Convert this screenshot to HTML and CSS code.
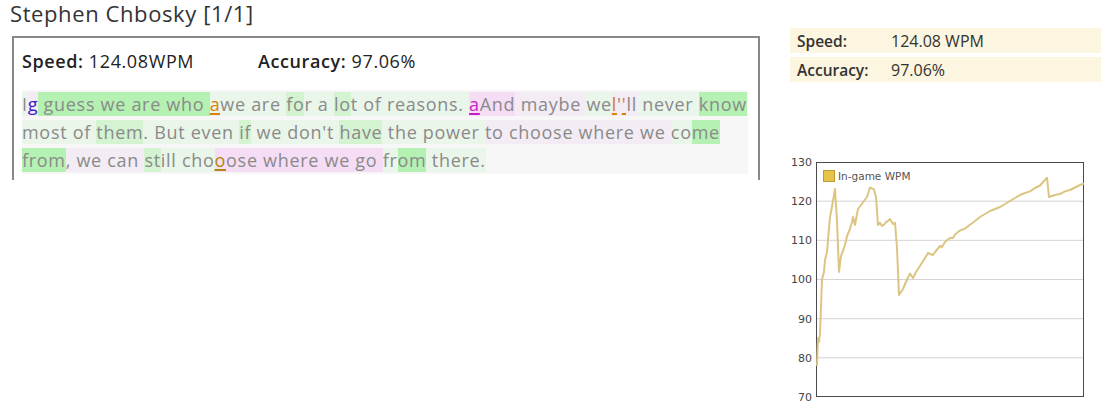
FILE: index.html
```html
<!DOCTYPE html>
<html>
<head>
<meta charset="utf-8">
<link rel="stylesheet" href="styles.css">
</head>
<body>
<div class="page">
  <div class="left">
    <h1 class="title">Stephen Chbosky [1/1]</h1>
    <div class="box">
      <div class="summary">
        <div class="stat stat-speed"><b>Speed:</b> 124.08WPM</div>
        <div class="stat"><b>Accuracy:</b> 97.06%</div>
      </div>
      <div class="replay"><span class="lg">I</span><span class="err e1 lp">g</span><span class="hg"> guess we are who </span><span class="err e2 lg">a</span><span class="lg">we </span><span class="lg">are </span><span class="mg">fo</span><span class="lg">r a </span><span class="mg">lo</span><span class="lg">t of </span><span class="lg">reasons. </span><span class="err e3 pk">a</span><span class="pk">And</span><span class="lp"> maybe </span><span class="lg">we</span><span class="err e2 lp">l</span><span class="lp">'</span><span class="err e2 lp">'</span><span class="lp">ll</span><span class="lg"> never </span><span class="hg">know</span><br><span class="lg">most of </span><span class="mg">them</span><span class="lg">. But even </span><span class="mg">if</span><span class="lg"> we don't </span><span class="mg">have</span><span class="lg"> the power </span><span class="lp">to choose where we </span><span class="lg">co</span><span class="hg">me</span><br><span class="hg">from</span><span class="lp">, we can </span><span class="mg">st</span><span class="lg">ill </span><span class="lg">cho</span><span class="err e4 pk">o</span><span class="pk">ose where we go </span><span class="lg">fr</span><span class="hg">om</span><span class="lg"> there.</span></div>
    </div>
  </div>
  <div class="right">
    <table class="stats">
      <tr><th>Speed:</th><td>124.08 WPM</td></tr>
      <tr><th>Accuracy:</th><td>97.06%</td></tr>
    </table>
    <svg class="chart" width="311" height="260" viewBox="0 0 311 260">
      <g class="grid">
        <line x1="26" y1="49.2" x2="294" y2="49.2"/>
        <line x1="26" y1="88.3" x2="294" y2="88.3"/>
        <line x1="26" y1="127.5" x2="294" y2="127.5"/>
        <line x1="26" y1="166.7" x2="294" y2="166.7"/>
        <line x1="26" y1="205.8" x2="294" y2="205.8"/>
      </g>
      <rect class="frame" x="26.5" y="10.5" width="267" height="234"/>
      <g class="ylabels">
        <text x="22" y="14">130</text>
        <text x="22" y="53">120</text>
        <text x="22" y="92">110</text>
        <text x="22" y="131">100</text>
        <text x="22" y="171">90</text>
        <text x="22" y="210">80</text>
        <text x="22" y="249">70</text>
      </g>
      <polyline class="series" points="27,213.7 28,186 29,190 30,182 32,127.5 34,120 35,108 37,100 38,88 40,65 43,49 45,37 47,69 49,120 51,104 54,96 56,89 57,84 60,77 62,70 63,65 65,73 67,62 68,57 71,53 74,49 77,45 80,35.5 84,37.4 86,45 88,73 90,70.7 92,74 94,72.7 96,70 98,69 100,67 103,72 105,70.7 107,96 109,143 113,137 117,127.5 120,121.6 123,126 126,120 130,114 135,106 138,101 140,102 143,103 145,100 150,94 152,95 155,90 160,86 163,86 165,82.5 170,78.5 175,76.6 180,72.7 185,69 190,65 195,62 200,59 205,57 210,55 215,52 220,49 225,46 230,43 235,41 240,39.4 245,36 250,33.5 254,29 257,25.7 259,45 265,43 270,42 275,39.4 280,38 285,35.5 290,33 294,31.5"/>
      <rect class="legend-key" x="33.5" y="18.5" width="11" height="11"/>
      <text class="legend-text" x="48" y="28">In-game WPM</text>
    </svg>
  </div>
</div>
</body>
</html>
```
FILE: styles.css
```css
html, body {
  margin: 0;
  padding: 0;
  background: #ffffff;
}
body {
  font-family: "Open Sans", "Noto Sans", sans-serif;
  color: #222;
}
.page {
  display: flex;
  align-items: flex-start;
}
.left {
  width: 770px;
  flex: none;
}
.title {
  margin: 0 0 0 10px;
  font-size: 22px;
  font-weight: 400;
  letter-spacing: 0.6px;
  line-height: 26px;
  height: 36px;
  color: #333;
}
.box {
  box-sizing: border-box;
  margin-left: 12px;
  width: 748px;
  height: 144px;
  border: 2px solid #888;
  border-bottom: none;
  padding: 12px 10px 6px 8px;
}
.summary {
  display: flex;
  font-size: 18px;
  letter-spacing: 0.6px;
  line-height: 22px;
  margin-bottom: 18px;
  color: #222;
}
.stat b { font-weight: 600; }
.stat-speed { width: 236px; }
.replay {
  background: #f7f7f7;
  font-size: 18px;
  letter-spacing: 0.7px;
  line-height: 28px;
  color: #8a8a8a;
  height: 84px;
  white-space: nowrap;
  overflow: hidden;
}
.hg { background: #b5f1b3; }
.mg { background: #d3f3d1; }
.lg { background: #eaf6ea; }
.lp { background: #f4ecf4; }
.pk { background: #f5ddf5; }
.err { text-decoration: underline; text-decoration-thickness: 2px; text-underline-offset: 2px; }
.e1 { color: #3a1ec2; }
.e2 { color: #d8820a; }
.e3 { color: #c81ec8; }
.e4 { color: #b0880a; }
.right {
  margin-left: 20px;
  width: 311px;
  flex: none;
  padding-top: 28px;
}
.stats {
  width: 311px;
  border-collapse: separate;
  border-spacing: 0 4px;
  margin-top: -4px;
  font-size: 16px;
  color: #333;
}
.stats th, .stats td {
  background: #fcf5df;
  height: 25px;
  padding: 0;
  text-align: left;
}
.stats th {
  width: 94px;
  padding-left: 7px;
  font-weight: 600;
  font-size: 15.5px;
}
.chart {
  display: block;
  margin-top: 66px;
}
.grid line { stroke: #d4d4d4; stroke-width: 1; }
.frame { fill: none; stroke: #4a4a4a; stroke-width: 1; }
.ylabels text {
  font-family: "DejaVu Sans", sans-serif;
  font-size: 11px;
  fill: #444;
  text-anchor: end;
}
.series { fill: none; stroke: #dcc582; stroke-width: 2; stroke-linejoin: round; }
.legend-key { fill: #e8c34a; stroke: #b9993a; stroke-width: 1; }
.legend-text { font-family: "DejaVu Sans", sans-serif; font-size: 10.5px; fill: #555; }
```
